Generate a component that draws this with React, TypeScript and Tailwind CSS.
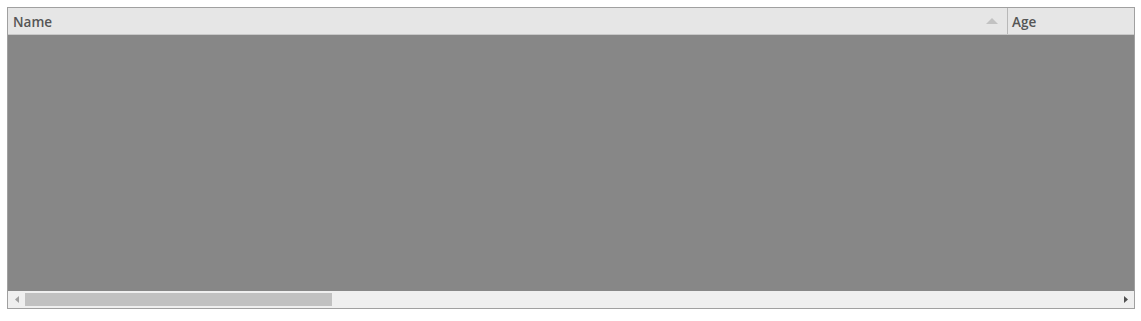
export default function App() {
  return (
    <div className="w-[1141px] h-[321px] bg-white pt-[7px] pl-[7px]" style={{ fontFamily: '"Open Sans", "Liberation Sans", sans-serif' }}>
      <div className="w-[1128px] h-[302px] border border-[#a0a0a0] flex flex-col bg-[#878787]">
        <div className="h-[27px] flex bg-[#e6e6e6] border-b border-[#c8c8c8] shrink-0">
          <div className="w-[1000px] flex items-center justify-between pl-[5px] pr-[9px] border-r border-[#b8b8b8]">
            <span className="text-[13.5px] font-semibold text-[#555555] pt-[2px]">Name</span>
            <svg width="12" height="6" viewBox="0 0 12 6"><path d="M0 6 L6 0 L12 6 Z" fill="#c2c2c2" /></svg>
          </div>
          <div className="flex-1 flex items-center pl-[4px]">
            <span className="text-[13.5px] font-semibold text-[#555555] pt-[2px]">Age</span>
          </div>
        </div>
        <div className="flex-1 bg-[#878787]" />
        <div className="h-[17px] bg-[#efefef] flex items-center shrink-0">
          <div className="w-[17px] flex items-center justify-center">
            <svg width="4" height="7" viewBox="0 0 4 7"><path d="M4 0 L0 3.5 L4 7 Z" fill="#a0a0a0" /></svg>
          </div>
          <div className="w-[307px] h-[13px] bg-[#c1c1c1]" />
          <div className="flex-1" />
          <div className="w-[17px] flex items-center justify-center">
            <svg width="4" height="7" viewBox="0 0 4 7"><path d="M0 0 L4 3.5 L0 7 Z" fill="#505050" /></svg>
          </div>
        </div>
      </div>
    </div>
  );
}
